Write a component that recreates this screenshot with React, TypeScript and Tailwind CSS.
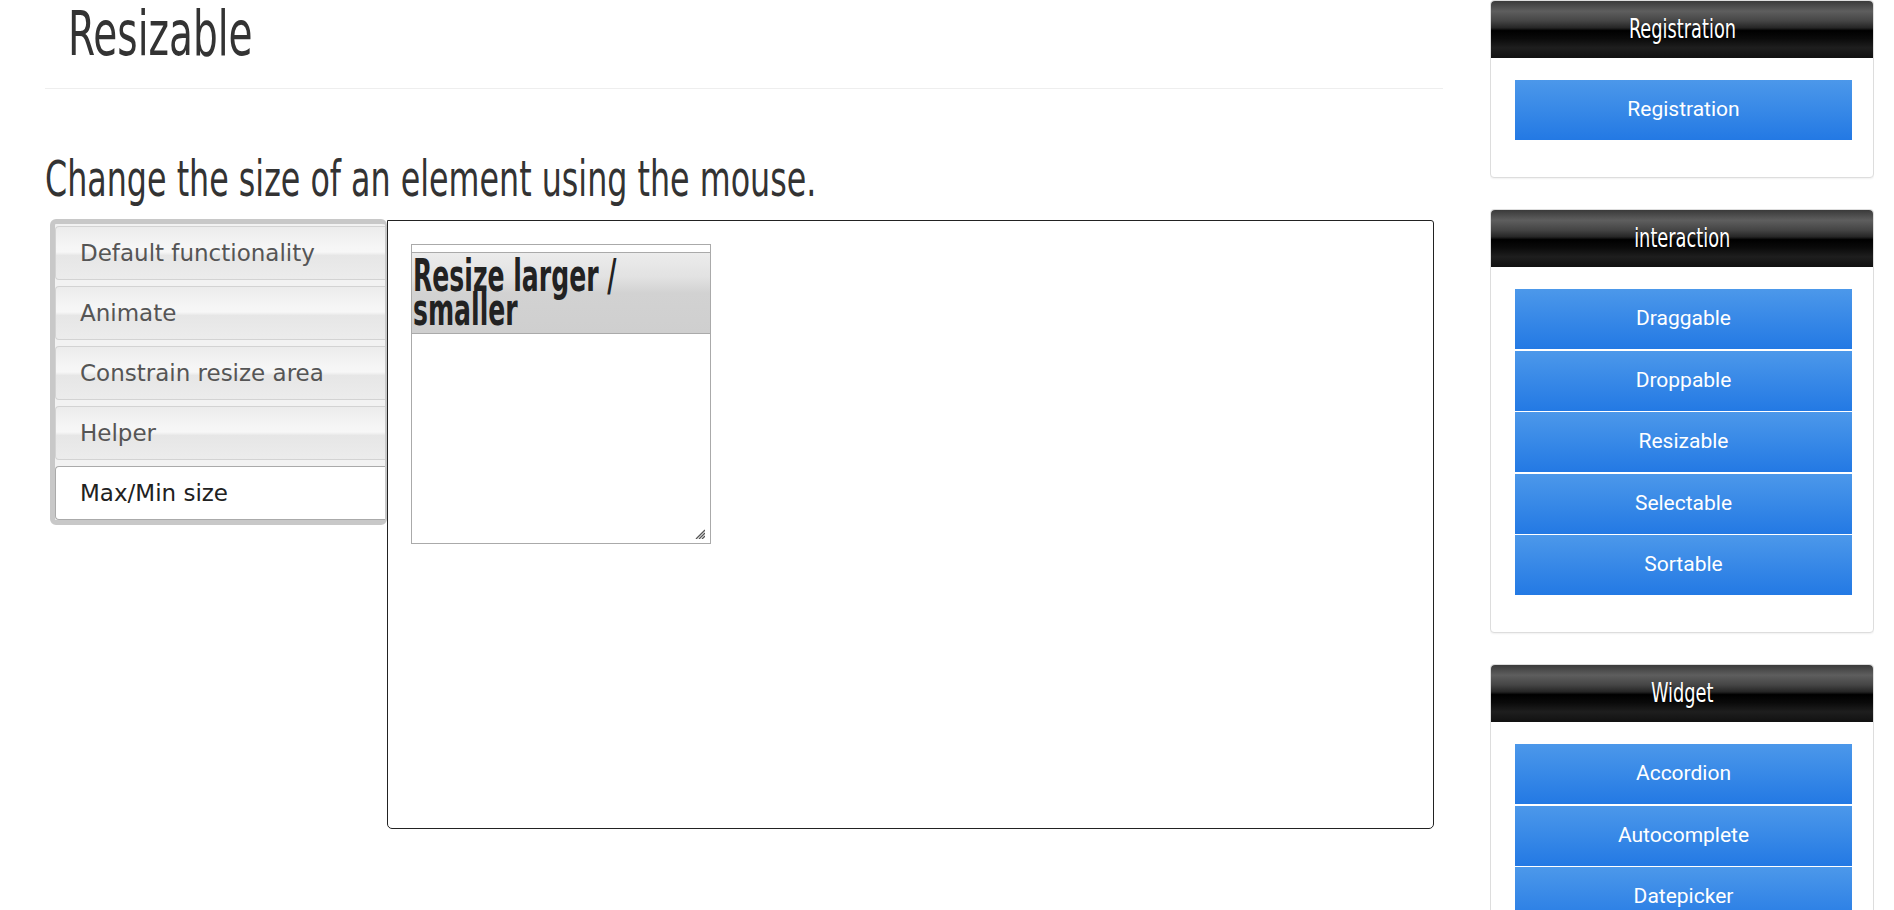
const narrow = "font-['DejaVu_Sans_Condensed','DejaVu_Sans',sans-serif]";

const tabs = ['Default functionality', 'Animate', 'Constrain resize area', 'Helper', 'Max/Min size'];
const active = 'Max/Min size';

const Panel = ({ title, items }: { title: string; items: string[] }) => (
  <div className="rounded-[4px] border border-[#ddd] bg-white shadow-[0_1px_2px_rgba(0,0,0,0.06)]">
    <div className="h-[57px] rounded-t-[4px] bg-[linear-gradient(to_bottom,#3a3a3a_0%,#5e5e5e_18%,#454545_35%,#262626_47%,#000_52%,#0a0a0a_66%,#1e1e1e_82%,#111_100%)] text-center">
      <span
        className={`${narrow} inline-block scale-x-[0.76] text-[26px] leading-[57px] text-white [text-shadow:0_1px_1px_rgba(0,0,0,0.6)]`}
      >
        {title}
      </span>
    </div>
    <div className="flex flex-col gap-[1.5px] pb-[37px] pl-[24px] pt-[22px]">
      {items.map((it) => (
        <div
          key={it}
          className="flex h-[60px] w-[337px] shrink-0 items-center justify-center bg-[linear-gradient(to_bottom,#4c98ea,#2379e4)] font-['Roboto',sans-serif] text-[21px] text-white"
        >
          {it}
        </div>
      ))}
    </div>
  </div>
);

export default function App() {
  return (
    <div className="flex min-h-screen bg-white text-[#333]">
      <main className="ml-[45px] w-[1398px] shrink-0">
        <h1 className={`${narrow} origin-left scale-x-[0.7] pl-[33px] pt-[4px] text-[62px] leading-[60px] text-[#333]`}>
          Resizable
        </h1>
        <div className="mt-[24px] border-t border-[#eee]" />
        <h2
          className={`${narrow} mt-[66px] w-[1400px] origin-left scale-x-[0.72] text-[49px] leading-[50px] text-[#333]`}
        >
          Change the size of an element using the mouse.
        </h2>

        <div className="mt-[14px] flex items-start">
          {/* vertical tabs */}
          <div className="ml-[5px] w-[337px] rounded-[6px] border-[5px] border-r-[2px] border-[#c8c8c8] bg-[#f2f2f2] pt-[2px]">
            <ul className="flex flex-col gap-[6px]">
              {tabs.map((t) => (
                <li
                  key={t}
                  className={
                    t === active
                      ? "flex h-[54px] items-center rounded-l-[4px] border border-r-0 border-[#aaa] bg-white pl-[24px] font-['DejaVu_Sans',Verdana,sans-serif] text-[23px] text-[#212121]"
                      : "flex h-[54px] items-center rounded-l-[4px] border border-r-0 border-[#d3d3d3] bg-[linear-gradient(to_bottom,#ececec_0%,#f5f5f5_35%,#f7f7f7_48%,#e6e6e6_55%,#ececec_100%)] pl-[24px] font-['DejaVu_Sans',Verdana,sans-serif] text-[23px] text-[#555]"
                  }
                >
                  {t}
                </li>
              ))}
            </ul>
          </div>

          {/* demo area */}
          <div className="mt-[1px] h-[609px] w-[1047px] rounded-b-[5px] rounded-tr-[3px] border border-[#222] p-[23px]">
            <div className="relative h-[300px] w-[300px] border border-[#aaa] pt-[7px]">
              <h3 className="-mx-[1px] h-[82px] border border-[#aaa] bg-[linear-gradient(to_bottom,#ececec_0%,#e2e2e2_30%,#d2d2d2_50%,#cfcfcf_100%)] pl-[1px] pt-[6px]">
                <span
                  className={`${narrow} block w-[470px] origin-left scale-x-[0.62] text-[45px] font-bold leading-[34px] text-[#222]`}
                >
                  Resize larger / smaller
                </span>
              </h3>
              <svg className="absolute bottom-[4px] right-[5px]" width="10" height="10" viewBox="0 0 10 10">
                <path d="M10 1 L1 10 M10 4 L4 10 M10 7 L7 10" stroke="#555" strokeWidth="1.3" />
              </svg>
            </div>
          </div>
        </div>
      </main>

      <aside className="ml-[47px] flex h-[910px] w-[384px] shrink-0 flex-col gap-[31px] overflow-hidden">
        <Panel title="Registration" items={['Registration']} />
        <Panel title="interaction" items={['Draggable', 'Droppable', 'Resizable', 'Selectable', 'Sortable']} />
        <Panel title="Widget" items={['Accordion', 'Autocomplete', 'Datepicker']} />
      </aside>
    </div>
  );
}
